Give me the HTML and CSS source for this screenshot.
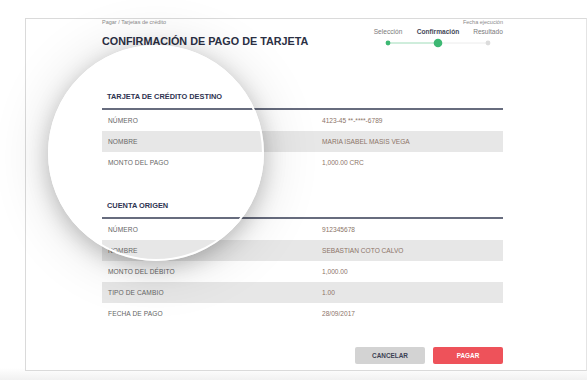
FILE: index.html
```html
<!DOCTYPE html>
<html lang="es">
<head>
<meta charset="utf-8">
<title>Confirmación de pago de tarjeta</title>
<link rel="stylesheet" href="styles.css">
</head>
<body>
<div class="page">
  <div class="card">
    <div class="crumbs">
      <span>Pagar / Tarjetas de crédito</span>
      <span>Fecha ejecución</span>
    </div>
    <div class="head">
      <h1 class="title">CONFIRMACIÓN DE PAGO DE TARJETA</h1>
      <div class="stepper">
        <div class="step-labels">
          <span>Selección</span>
          <span class="active">Confirmación</span>
          <span>Resultado</span>
        </div>
        <svg class="track" width="150" height="10" viewBox="0 0 150 10">
          <line x1="25" y1="5" x2="75" y2="5" stroke="#9fdcb9" stroke-width="1"/>
          <line x1="75" y1="5" x2="125" y2="5" stroke="#ececec" stroke-width="1"/>
          <circle cx="25" cy="5" r="2.4" fill="#3db873"/>
          <circle cx="75" cy="5" r="4.3" fill="#3db873"/>
          <circle cx="125" cy="5" r="2.4" fill="#dcdcdc"/>
        </svg>
      </div>
    </div>

    <section class="sec first">
      <h2 class="sec-title">TARJETA DE CRÉDITO DESTINO</h2>
      <div class="row"><span class="lbl">NÚMERO</span><span class="val">4123-45 **-****-6789</span></div>
      <div class="row alt"><span class="lbl">NOMBRE</span><span class="val">MARIA ISABEL MASIS VEGA</span></div>
      <div class="row"><span class="lbl">MONTO DEL PAGO</span><span class="val">1,000.00 CRC</span></div>
    </section>

    <section class="sec second">
      <h2 class="sec-title">CUENTA ORIGEN</h2>
      <div class="row"><span class="lbl">NÚMERO</span><span class="val">912345678</span></div>
      <div class="row alt"><span class="lbl">NOMBRE</span><span class="val">SEBASTIAN COTO CALVO</span></div>
      <div class="row"><span class="lbl">MONTO DEL DÉBITO</span><span class="val">1,000.00</span></div>
      <div class="row alt"><span class="lbl">TIPO DE CAMBIO</span><span class="val">1.00</span></div>
      <div class="row"><span class="lbl">FECHA DE PAGO</span><span class="val">28/09/2017</span></div>
    </section>

    <div class="actions">
      <button class="btn cancel">CANCELAR</button>
      <button class="btn pay">PAGAR</button>
    </div>
  </div>
  <div class="lens"></div>
</div>
</body>
</html>
```
FILE: styles.css
```css
* { box-sizing: border-box; }
html, body { margin: 0; padding: 0; background: #fff; }
body { font-family: "Liberation Sans", Arial, sans-serif; }

.page {
  position: relative;
  width: 587px;
  height: 380px;
  overflow: hidden;
  padding: 18px 0 0 25px;
  background: linear-gradient(to bottom, #fff 0, #fff 368px, #f1f1f1 380px);
}

.card {
  width: 562px;
  height: 353px;
  border: 1px solid #dadada;
  border-right-color: #e4e4e4;
  background: #fff;
  overflow: hidden;
  padding: 0 83px 0 76px;
}

.crumbs {
  display: flex;
  justify-content: space-between;
  margin-top: 0;
  height: 6px;
  font-size: 5.5px;
  line-height: 6px;
  color: #8a8a8a;
}

.head {
  display: flex;
  justify-content: space-between;
  align-items: flex-start;
  margin-top: 2px;
}

.title {
  margin: 0;
  padding-top: 8px;
  font-size: 10.8px;
  line-height: 13px;
  font-weight: bold;
  color: #2b3044;
}

.stepper {
  width: 150px;
  margin-right: -10px;
  display: flex;
  flex-direction: column;
}

.step-labels {
  display: grid;
  grid-template-columns: repeat(3, 50px);
  font-size: 6.6px;
  line-height: 10px;
  color: #7a7a7a;
  text-align: center;
}
.step-labels .active { color: #444857; font-weight: bold; }

.track { display: block; margin-top: 1px; }

.sec.first { margin-top: 44px; }
.sec.second { margin-top: 28px; }

.sec-title {
  margin: 0;
  padding: 0 5px 6px;
  font-size: 7.4px;
  line-height: 10px;
  font-weight: bold;
  color: #2f3451;
  border-bottom: 2px solid #676c7e;
}

.row {
  display: grid;
  grid-template-columns: 220px 1fr;
  height: 21px;
  align-items: center;
  font-size: 6.6px;
}
.row.alt { background: #e7e7e7; }
.lbl { padding-left: 6px; color: #666; letter-spacing: 0.1px; }
.val { color: #8c7468; }

.actions {
  display: flex;
  justify-content: flex-end;
  gap: 8px;
  margin-top: 23px;
}

.btn {
  width: 70px;
  height: 17px;
  border: none;
  border-radius: 2px;
  font-family: "Liberation Sans", Arial, sans-serif;
  font-size: 6.4px;
  font-weight: bold;
  padding: 0;
}
.btn.cancel { background: #d3d3d3; color: #3c4154; }
.btn.pay { background: #ee525a; color: #fff; }

.lens {
  position: absolute;
  left: 48px;
  top: 45px;
  width: 216px;
  height: 216px;
  border-radius: 50%;
  border: 2px solid #fff;
  box-shadow: 0 6px 22px rgba(0, 0, 0, 0.22), 0 4px 60px rgba(0, 0, 0, 0.14);
}
```
